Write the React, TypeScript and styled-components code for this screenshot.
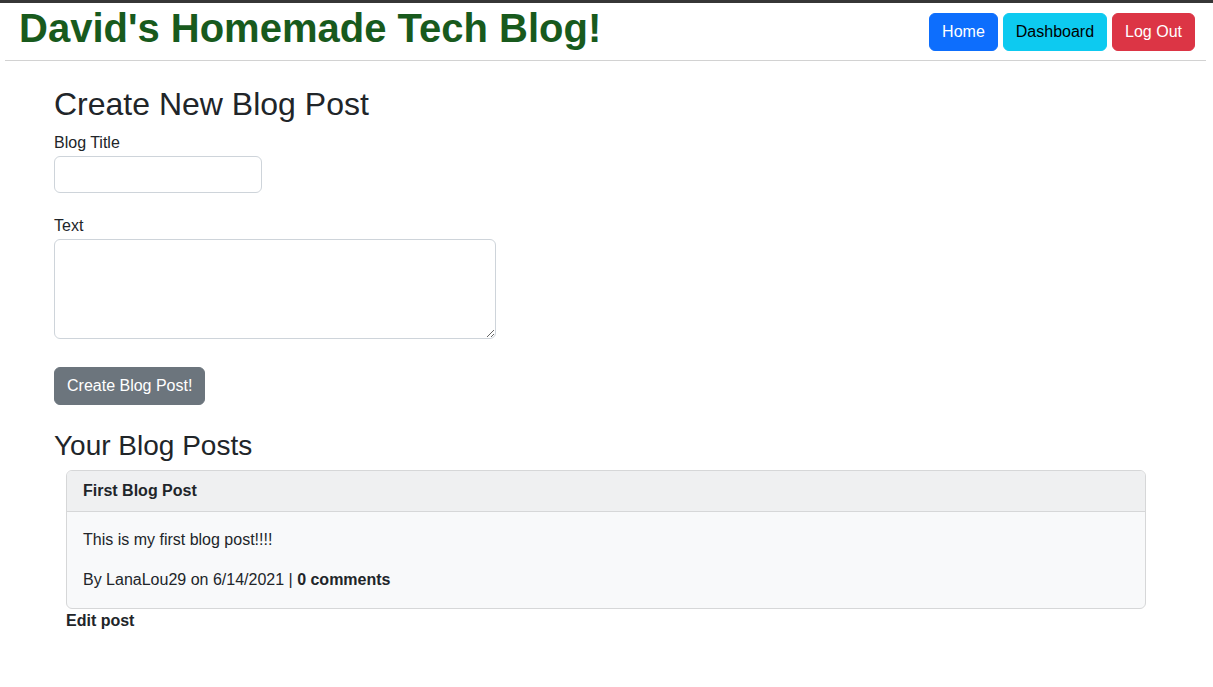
import React from "react";
import styled, { createGlobalStyle } from "styled-components";

const GlobalStyle = createGlobalStyle`
  html, body { margin: 0; padding: 0; background: #fff; }
  body {
    font-family: "Liberation Sans", Arial, sans-serif;
    font-size: 16px;
    line-height: 1.5;
    color: #212529;
  }
  * { box-sizing: border-box; }
`;

const TopStripe = styled.div`
  height: 3px;
  background: #363636;
`;

const Header = styled.header`
  display: flex;
  align-items: center;
  justify-content: space-between;
  margin: 0 7px 0 5px;
  padding: 1px 11px 0 14px;
  border-bottom: 1px solid #d2d2d2;
`;

const SiteTitle = styled.h1`
  margin: 0 0 8px;
  font-size: 40px;
  line-height: 1.2;
  font-weight: 700;
  color: #185a1d;
`;

const Nav = styled.nav`
  display: flex;
  gap: 5px;
`;

const variants = {
  primary: { bg: "#0d6efd", fg: "#fff" },
  info: { bg: "#0dcaf0", fg: "#000" },
  danger: { bg: "#dc3545", fg: "#fff" },
  secondary: { bg: "#6c757d", fg: "#fff" },
};

const Button = styled.button<{ $variant: keyof typeof variants }>`
  display: inline-block;
  padding: 6px 12px;
  font-family: inherit;
  font-size: 16px;
  line-height: 24px;
  border: 1px solid ${(p) => variants[p.$variant].bg};
  border-radius: 6px;
  background: ${(p) => variants[p.$variant].bg};
  color: ${(p) => variants[p.$variant].fg};
  cursor: pointer;
`;

const Main = styled.main`
  padding: 24px 67px 40px 54px;
`;

const PageHeading = styled.h2`
  margin: 0 0 8px;
  font-size: 32px;
  font-weight: 500;
  line-height: 1.2;
`;

const SectionHeading = styled.h3`
  margin: 24px 0 7px;
  font-size: 28px;
  font-weight: 500;
  line-height: 1.2;
`;

const Form = styled.form`
  display: flex;
  flex-direction: column;
  align-items: flex-start;
`;

const Field = styled.div<{ $gap: number }>`
  display: flex;
  flex-direction: column;
  margin-bottom: ${(p) => p.$gap}px;
`;

const Label = styled.label`
  display: block;
  line-height: 24px;
  margin-bottom: 1px;
`;

const TextInput = styled.input`
  width: 208px;
  height: 37px;
  padding: 6px 12px;
  font: inherit;
  border: 1px solid #ced4da;
  border-radius: 6px;
  background: #fff;
`;

const TextArea = styled.textarea`
  width: 442px;
  height: 100px;
  padding: 6px 12px;
  font: inherit;
  border: 1px solid #ced4da;
  border-radius: 6px;
  background: #fff;
`;

const PostList = styled.section`
  margin-left: 12px;
`;

const Card = styled.article`
  border: 1px solid #d6d7d8;
  border-radius: 6px;
  background: #f8f9fa;
  overflow: hidden;
`;

const CardHeader = styled.div`
  padding: 8px 16px;
  background: #eff0f1;
  border-bottom: 1px solid #d6d7d8;
  font-weight: 700;
  line-height: 24px;
`;

const CardBody = styled.div`
  padding: 16px;
`;

const Paragraph = styled.p<{ $last?: boolean }>`
  margin: 0 0 ${(p) => (p.$last ? 0 : 16)}px;
`;

const EditLink = styled.a`
  display: inline-block;
  font-weight: 700;
  color: #212529;
  text-decoration: none;
  line-height: 24px;
`;

export default function App() {
  return (
    <>
      <GlobalStyle />
      <TopStripe />
      <Header>
        <SiteTitle>David's Homemade Tech Blog!</SiteTitle>
        <Nav>
          <Button $variant="primary">Home</Button>
          <Button $variant="info">Dashboard</Button>
          <Button $variant="danger">Log Out</Button>
        </Nav>
      </Header>
      <Main>
        <PageHeading>Create New Blog Post</PageHeading>
        <Form onSubmit={(e) => e.preventDefault()}>
          <Field $gap={21}>
            <Label htmlFor="title">Blog Title</Label>
            <TextInput id="title" type="text" />
          </Field>
          <Field $gap={28}>
            <Label htmlFor="text">Text</Label>
            <TextArea id="text" />
          </Field>
          <Button $variant="secondary" type="submit">
            Create Blog Post!
          </Button>
        </Form>
        <SectionHeading>Your Blog Posts</SectionHeading>
        <PostList>
          <Card>
            <CardHeader>First Blog Post</CardHeader>
            <CardBody>
              <Paragraph>This is my first blog post!!!!</Paragraph>
              <Paragraph $last>
                By LanaLou29 on 6/14/2021 | <b>0 comments</b>
              </Paragraph>
            </CardBody>
          </Card>
          <EditLink href="#">Edit post</EditLink>
        </PostList>
      </Main>
    </>
  );
}
